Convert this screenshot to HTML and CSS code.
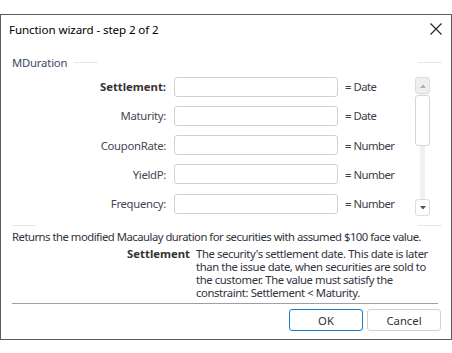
FILE: index.html
```html
<!DOCTYPE html>
<html>
<head>
<title>Function wizard</title>
<link rel="stylesheet" href="styles.css">
</head>
<body>
<div class="dialog">
  <div class="titlebar">
    <span class="title">Function wizard - step 2 of 2</span>
    <svg class="close" width="12" height="12" viewBox="0 0 12 12"><path d="M0.5 0.5 L11.5 11.5 M11.5 0.5 L0.5 11.5" stroke="#222" stroke-width="1.1" fill="none"/></svg>
  </div>

  <div class="group">
    <div class="group-head">
      <span class="group-name">MDuration</span>
      <span class="seg"></span>
      <span class="fill"></span>
      <span class="seg"></span>
    </div>
    <div class="group-body">
      <div class="args">
        <div class="arg">
          <label class="arg-name bold">Settlement:</label>
          <input class="arg-input" type="text">
          <span class="arg-type">= Date</span>
        </div>
        <div class="arg">
          <label class="arg-name">Maturity:</label>
          <input class="arg-input" type="text">
          <span class="arg-type">= Date</span>
        </div>
        <div class="arg">
          <label class="arg-name">CouponRate:</label>
          <input class="arg-input" type="text">
          <span class="arg-type">= Number</span>
        </div>
        <div class="arg">
          <label class="arg-name">YieldP:</label>
          <input class="arg-input" type="text">
          <span class="arg-type">= Number</span>
        </div>
        <div class="arg">
          <label class="arg-name">Frequency:</label>
          <input class="arg-input" type="text">
          <span class="arg-type">= Number</span>
        </div>
      </div>
      <div class="scrollbar">
        <div class="sb-btn up"><svg width="6" height="4" viewBox="0 0 6 4"><path d="M0 4 L3 0.5 L6 4 Z" fill="#b0b0b0"/></svg></div>
        <div class="sb-track">
          <div class="sb-thumb"></div>
        </div>
        <div class="sb-btn down"><svg width="6" height="4" viewBox="0 0 6 4"><path d="M0 0 L6 0 L3 3.5 Z" fill="#555"/></svg></div>
      </div>
    </div>
    <div class="group-foot">
      <span class="seg"></span>
      <span class="fill"></span>
      <span class="seg"></span>
    </div>
  </div>

  <p class="summary">Returns the modified Macaulay duration for securities with assumed $100 face value.</p>
  <div class="param">
    <span class="param-name">Settlement</span>
    <span class="param-text">The security's settlement date. This date is later<br>than the issue date, when securities are sold to<br>the customer. The value must satisfy the<br>constraint: Settlement &lt; Maturity.</span>
  </div>

  <div class="sep"></div>

  <div class="buttons">
    <button class="btn default">OK</button>
    <button class="btn">Cancel</button>
  </div>
</div>
</body>
</html>
```

FILE: styles.css
```css
* {
  box-sizing: border-box;
}

body {
  margin: 0;
  background: #ffffff;
  font-family: "Noto Sans", "Liberation Sans", sans-serif;
  font-size: 11.3px;
  color: #3b3b48;
}

.dialog {
  margin-top: 14px;
  width: 452px;
  height: 326px;
  border: 1px solid #5c5c5c;
  background: #ffffff;
  overflow: hidden;
}

.titlebar {
  height: 28px;
  display: flex;
  align-items: center;
  justify-content: space-between;
  padding: 0 9px 0 8px;
}

.title {
  color: #000000;
  font-size: 11.6px;
  letter-spacing: -0.1px;
}

.group {
  margin: 11px 9px 0 11px;
}

.group-head {
  height: 16px;
  display: flex;
  align-items: center;
}

.group-name {
  color: #3c4a66;
  letter-spacing: -0.2px;
}

.seg {
  width: 24px;
  height: 1px;
  background: #e6e6e6;
}

.group-head .seg:nth-child(2) {
  margin-left: 7px;
}

.fill {
  flex: 1;
}

.group-body {
  display: flex;
  margin-top: 2px;
}

.args {
  width: 403px;
}

.arg {
  height: 29.25px;
  display: flex;
  align-items: center;
  white-space: nowrap;
}

.arg-name {
  width: 154px;
  text-align: right;
  color: #454553;
  letter-spacing: -0.3px;
}

.arg-name.bold {
  font-weight: bold;
  color: #333333;
  letter-spacing: 0;
}

.arg-input {
  margin-left: 8px;
  width: 164px;
  height: 20px;
  border: 1px solid #d0d0d0;
  border-radius: 3px;
  background: #ffffff;
  font: inherit;
  outline: none;
}

.arg-type {
  margin-left: 7px;
  color: #3b3b48;
  letter-spacing: -0.5px;
}

.scrollbar {
  margin-top: 5px;
  width: 15px;
  height: 139px;
  display: flex;
  flex-direction: column;
  align-items: center;
}

.sb-btn {
  width: 15px;
  height: 17px;
  border: 1px solid #dcdcdc;
  border-radius: 3px;
  display: flex;
  align-items: center;
  justify-content: center;
}

.sb-btn.up {
  background: #efefef;
}

.sb-btn.down {
  background: #ffffff;
}

.sb-track {
  flex: 1;
  width: 5px;
  background: #f0f0f0;
  position: relative;
}

.sb-thumb {
  position: absolute;
  left: -5px;
  top: 1px;
  width: 15px;
  height: 51px;
  background: #ffffff;
  border: 1px solid #d6d6d6;
  border-radius: 3px;
}

.group-foot {
  margin-top: 7px;
  height: 1px;
  display: flex;
}

.summary {
  margin: 4px 0 0 11px;
  line-height: 13px;
  white-space: nowrap;
  color: #333340;
  letter-spacing: -0.5px;
}

.param {
  display: flex;
  margin-top: 4px;
  line-height: 13px;
  white-space: nowrap;
}

.param-name {
  width: 189px;
  text-align: right;
  font-weight: bold;
  color: #333333;
}

.param-text {
  margin-left: 6px;
  color: #333340;
  letter-spacing: -0.4px;
}

.sep {
  margin: 4px 0 0 11px;
  width: 426px;
  height: 1px;
  background: #a0a0a0;
}

.buttons {
  display: flex;
  justify-content: flex-end;
  gap: 4px;
  margin: 5px 10px 0 0;
}

.btn {
  width: 74px;
  height: 22px;
  border: 1px solid #d0d0d0;
  border-radius: 3px;
  background: #ffffff;
  font: inherit;
  color: #333333;
  padding: 0;
}

.btn.default {
  border-color: #1a7bc4;
}
```
